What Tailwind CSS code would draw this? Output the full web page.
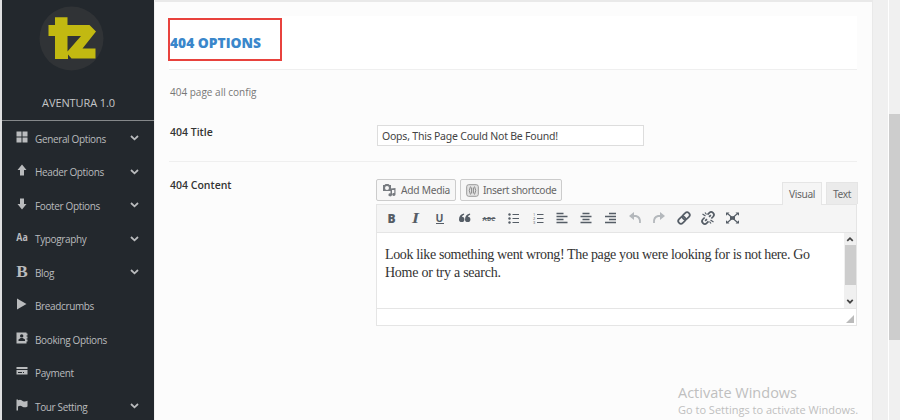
<!DOCTYPE html>
<html lang="en">
<head>
<meta charset="utf-8">
<title>404 Options</title>
<script src="https://cdn.jsdelivr.net/npm/@tailwindcss/browser@4"></script>
</head>
<body class="w-[900px] h-[420px] overflow-hidden bg-[#f1f1f1] font-['Open_Sans','Noto_Sans',sans-serif]">
<div class="relative flex w-[900px] h-[420px] overflow-hidden">
  <aside class="w-[154px] shrink-0 bg-[#23282d] border-l-2 border-l-[#dfe0e1] text-[#b9bbbd]">
    <div class="h-[121px] border-b border-[#85888a] flex flex-col items-center">
      <svg class="mt-[6px] -ml-[13px] shrink-0" width="65" height="65" viewBox="0 0 65 65">
        <circle cx="32.500" cy="32.500" r="32" fill="#303336"/>
        <path fill="#c2b911" d="M16 11.300H28.500V19H50.500L57 25.500L43.500 42.500H56.500V52.500H32.500L29 48.500V53H16V30H9.500V19H16ZM28.500 30V45.500L42 30Z"/>
      </svg>
      <div class="mt-[24px] ml-px text-[11px] leading-[16px] tracking-[-0.1px] text-[#c4c6c8]">AVENTURA 1.0</div>
    </div>
    <nav class="pt-px text-[10px] tracking-[-0.36px] leading-[16px]">
      <div class="h-[33.500px] flex items-center pl-[14px] pr-[15px]"><svg class="w-[12px] h-[12px] -mt-[4px] mr-[7px]" viewBox="0 0 12 12" fill="currentColor"><path d="M.5.500h5v5h-5zM6.500.500h5v5h-5zM.5 6.500h5v5h-5zM6.500 6.500h5v5h-5z"/></svg><span class="flex-1">General Options</span><svg class="w-[9px] h-[6px] -mt-[1px]" viewBox="0 0 9 6" fill="none" stroke="currentColor" stroke-width="1.800"><path d="M1 1l3.500 3.300L8 1"/></svg></div>
      <div class="h-[33.500px] flex items-center pl-[14px] pr-[15px]"><svg class="w-[12px] h-[12px] -mt-[4px] mr-[7px]" viewBox="0 0 12 12" fill="currentColor"><path d="M6 .5L10.500 6H8v5.500H4V6H1.500z"/></svg><span class="flex-1">Header Options</span><svg class="w-[9px] h-[6px] -mt-[1px]" viewBox="0 0 9 6" fill="none" stroke="currentColor" stroke-width="1.800"><path d="M1 1l3.500 3.300L8 1"/></svg></div>
      <div class="h-[33.500px] flex items-center pl-[14px] pr-[15px]"><svg class="w-[12px] h-[12px] -mt-[4px] mr-[7px]" viewBox="0 0 12 12" fill="currentColor"><path d="M6 11.500L1.500 6H4V.5h4V6h2.500z"/></svg><span class="flex-1">Footer Options</span><svg class="w-[9px] h-[6px] -mt-[1px]" viewBox="0 0 9 6" fill="none" stroke="currentColor" stroke-width="1.800"><path d="M1 1l3.500 3.300L8 1"/></svg></div>
      <div class="h-[33.500px] flex items-center pl-[14px] pr-[15px]"><svg class="w-[12px] h-[12px] -mt-[4px] mr-[7px] overflow-visible" viewBox="0 0 12 12" fill="currentColor"><text x=".3" y="10" letter-spacing="0" font-family="Open Sans" font-weight="700" font-size="11" textLength="11.500" lengthAdjust="spacingAndGlyphs">Aa</text></svg><span class="flex-1">Typography</span><svg class="w-[9px] h-[6px] -mt-[1px]" viewBox="0 0 9 6" fill="none" stroke="currentColor" stroke-width="1.800"><path d="M1 1l3.500 3.300L8 1"/></svg></div>
      <div class="h-[33.500px] flex items-center pl-[14px] pr-[15px]"><svg class="w-[12px] h-[12px] -mt-[4px] mr-[7px] overflow-visible" viewBox="0 0 12 12" fill="currentColor"><text x=".3" y="11.500" letter-spacing="0" font-family="Liberation Serif" font-weight="700" font-size="17" textLength="11.500" lengthAdjust="spacingAndGlyphs">B</text></svg><span class="flex-1">Blog</span><svg class="w-[9px] h-[6px] -mt-[1px]" viewBox="0 0 9 6" fill="none" stroke="currentColor" stroke-width="1.800"><path d="M1 1l3.500 3.300L8 1"/></svg></div>
      <div class="h-[33.500px] flex items-center pl-[14px] pr-[15px]"><svg class="w-[12px] h-[12px] -mt-[4px] mr-[7px]" viewBox="0 0 12 12" fill="currentColor"><path d="M1 .5L10.500 6L1 11.500z"/></svg><span class="flex-1">Breadcrumbs</span></div>
      <div class="h-[33.500px] flex items-center pl-[14px] pr-[15px]"><svg class="w-[12px] h-[12px] -mt-[4px] mr-[7px]" viewBox="0 0 12 12"><path fill="currentColor" d="M.5.500h10v1h1v2h-1v1h1v2h-1v1h1v2h-1v2H.5z"/><circle cx="5.700" cy="3.900" r="1.700" fill="#23282d"/><path fill="#23282d" d="M2.500 9V7.500l2.200-1.600h2L9 7.500V9z"/></svg><span class="flex-1">Booking Options</span></div>
      <div class="h-[33.500px] flex items-center pl-[14px] pr-[15px]"><svg class="w-[12px] h-[12px] -mt-[4px] mr-[7px]" viewBox="0 0 12 12"><path fill="currentColor" d="M.5 2h11v2H.5zM.5 5h11v4.500H.5z"/><path stroke="#23282d" d="M2 7.500h4M7 7.500h1"/></svg><span class="flex-1">Payment</span></div>
      <div class="h-[33.500px] flex items-center pl-[14px] pr-[15px]"><svg class="w-[12px] h-[12px] -mt-[4px] mr-[7px]" viewBox="0 0 12 12" fill="currentColor"><path d="M.5.500h1.500v.8C4.500 0 5.500 1.200 7 2.200c1.500.6 3 .3 4.500-.4v5.700c-2 1.200-3.500 1-5 .2C5 6.700 3.800 6.500 2 7.500v4H.5z"/></svg><span class="flex-1">Tour Setting</span><svg class="w-[9px] h-[6px] -mt-[1px]" viewBox="0 0 9 6" fill="none" stroke="currentColor" stroke-width="1.800"><path d="M1 1l3.500 3.300L8 1"/></svg></div>
    </nav>
  </aside>

  <main class="ml-px w-[718px] shrink-0 bg-[#fcfcfc] border-t-2 border-t-[#e9e9e9] border-r border-r-[#e9e9e9] pl-[14px] pr-[15px]">
    <header class="mt-[14px] h-[54px] bg-white border-b border-[#efefef]">
      <div class="relative top-[2px] -left-px w-[114px] h-[43px] border-2 border-[#e8423d] flex items-center pt-[8px] text-[13.800px] font-extrabold text-[#3a87cb] whitespace-nowrap">404 OPTIONS</div>
    </header>
    <p class="mt-[14px] pl-px text-[10px] leading-[16px] text-[#777]">404 page all config</p>
    <section class="mt-[24px] pl-px h-[38px] flex border-b border-[#efefef]">
      <h2 class="w-[207px] text-[10.500px] leading-[16px] font-semibold text-[#333]">404 Title</h2>
      <div class="mt-px w-[267px] h-[21px] border border-[#ddd] bg-white pl-[4px] text-[10.500px] tracking-[-0.22px] leading-[21px] text-[#444] whitespace-nowrap font-['Noto_Sans',sans-serif]"><span>Oops, This Page Could Not Be Found!</span></div>
    </section>
    <section class="pt-[15px] pl-px flex">
      <h2 class="w-[206px] shrink-0 text-[10.500px] leading-[16px] font-semibold text-[#333]">404 Content</h2>
      <div class="w-[482px] shrink-0 mt-[2px]">
        <div class="flex h-[25px] text-[10.200px] tracking-[-0.36px] text-[#666] font-['Noto_Sans',sans-serif]">
          <div class="w-[80px] h-[22px] border border-[#ccc] rounded-[2px] bg-[#f7f7f7] flex items-center pl-[5px] pt-px tracking-[-0.25px] whitespace-nowrap"><svg class="mr-[5px] -mt-px shrink-0" width="14" height="14" viewBox="0 0 14 14" fill="#777b80"><path fill-rule="evenodd" d="M1 2h1.500L3.500 1h3l1 1H9v6H1zM5 3a2 2 0 1 0 0 4a2 2 0 0 0 0-4z"/><path d="M8.500 5.500L13.500 5v6.500a1.700 1.500 0 1 1-1.200-1.500V7H10v5a1.800 1.500 0 1 1-1.500-1.600z"/></svg>Add Media</div>
          <div class="ml-[4px] w-[102px] h-[22px] border border-[#ccc] rounded-[2px] bg-[#f7f7f7] flex items-center pl-[5px] pt-px whitespace-nowrap"><svg class="mr-[4px] shrink-0" width="13" height="13" viewBox="0 0 13 13"><rect x=".7" y=".7" width="11.600" height="11.600" rx="2" fill="#e4e4e4" stroke="#999"/><path d="M4.500 2.500Q2 6.500 4.500 10.500M8.500 2.500Q11 6.500 8.500 10.500M5.600 3.500v6M7.400 3.500v6" fill="none" stroke="#888"/></svg>Insert shortcode</div>
          <div class="relative z-10 ml-[220px] mt-[3px] w-[40px] h-[23px] border border-b-0 border-[#e5e5e5] bg-[#f5f5f5] text-center leading-[23px]">Visual</div>
          <div class="ml-[4px] mt-[3px] w-[32px] h-[22px] border border-b-0 border-[#e5e5e5] bg-[#ebebeb] text-center leading-[23px]">Text</div>
        </div>
        <div class="h-[122px] w-[481px] border border-[#e5e5e5] bg-white flex flex-col">
          <div class="h-[28px] shrink-0 bg-[#f5f5f5] border-b border-[#e5e5e5]">
            <svg width="479" height="27" viewBox="377 205 479 27" fill="none" stroke="#555d66" stroke-width="1.500">
              <g fill="#555d66" stroke="none">
                <text x="387.500" y="222.500" font-family="Open Sans" font-weight="800" font-size="12">B</text>
                <text x="412" y="222.500" font-family="Liberation Serif" font-weight="700" font-style="italic" font-size="14" textLength="7" lengthAdjust="spacingAndGlyphs">I</text>
                <text x="435.500" y="221.500" font-family="Open Sans" font-weight="700" font-size="10.500">U</text>
                <text x="482.500" y="220.500" font-family="Open Sans" font-weight="700" font-size="6" textLength="12.500">ABC</text>
                <path d="M464 213.500q-5 1-5 6a2.700 2.700 0 1 0 2.900-2.800q.5-1.600 2.300-2zM470 213.500q-5 1-5 6a2.700 2.700 0 1 0 2.900-2.800q.5-1.600 2.300-2z"/>
                <circle cx="509.500" cy="214.500" r="1.200"/><circle cx="509.500" cy="218.500" r="1.200"/><circle cx="509.500" cy="222.500" r="1.200"/>
                <text x="533" y="216" font-family="Open Sans" font-size="4">1</text><text x="533" y="220" font-family="Open Sans" font-size="4">2</text><text x="533" y="224" font-family="Open Sans" font-size="4">3</text>
              </g>
              <path stroke-width="1" d="M436 223.500h8M482.500 218.500h13M512.500 214.500h6.500M512.500 218.500h6.500M512.500 222.500h6.500M537 214.500h6.500M537 218.500h6.500M537 222.500h6.500"/>
              <path d="M556.500 213.500h7M556.500 216.500h11M556.500 219.500h7M556.500 222.500h11M582.500 213.500h7M580.500 216.500h11M582.500 219.500h7M580.500 222.500h11M609 213.500h7M605 216.500h11M609 219.500h7M605 222.500h11"/>
              <path stroke="#b4b8bc" stroke-width="1.800" d="M632 216h4q4.500 1 4 7M662 216h-4q-4.500 1-4 7"/>
              <path fill="#b4b8bc" stroke="none" d="M629 216l5-4v8zM665 216l-5-4v8z"/>
              <g stroke-width="1.700" transform="rotate(-45 684 218)"><rect x="677" y="215.300" width="8" height="5.400" rx="2.700"/><rect x="683" y="215.300" width="8" height="5.400" rx="2.700"/></g>
              <g stroke-width="1.700" transform="rotate(-45 708 218)"><path d="M706 215.300h-2.500a2.700 2.700 0 0 0 0 5.400h2.500M710 215.300h2.500a2.700 2.700 0 0 1 0 5.400h-2.500M704 218h2.500M709.500 218h2.500"/></g>
              <path stroke-width="1.200" d="M702.500 214l3 2M705 212.500l1.500 2M713.500 222l-3-2M711 223.500l-1.500-2"/>
              <path stroke-width="1.100" d="M727.500 213.500l10 9M737.500 213.500l-10 9"/>
              <path fill="#555d66" stroke="none" d="M726 212.500h3.500l-3.500 3.200zM739 212.500h-3.500l3.500 3.200zM726 223.500h3.500l-3.500-3.200zM739 223.500h-3.500l3.500-3.200zM730 216.300h5v3.400h-5z"/>
            </svg>
          </div>
          <div class="h-[76px] shrink-0 flex border-b border-[#e5e5e5]">
            <div class="w-[467px] pl-[8px] pt-[13px] text-[14px] leading-[18px] tracking-[-0.365px] text-[#333] whitespace-nowrap font-['Liberation_Serif',serif]"><div>Look like something went wrong! The page you were looking for is not here. Go</div><div class="tracking-[-0.25px]">Home or try a search.</div></div>
            <div class="w-[12px] bg-[#f0f0f0] flex flex-col items-center">
              <svg width="12" height="12" viewBox="0 0 12 12" fill="none" stroke="#444" stroke-width="1.700"><path d="M3.200 8L6 5.200 8.800 8"/></svg>
              <div class="w-[11px] h-[41px] bg-[#cdcdcd]"></div>
              <svg class="mt-[11px]" width="12" height="12" viewBox="0 0 12 12" fill="none" stroke="#444" stroke-width="1.700"><path d="M3.200 4L6 6.800 8.800 4"/></svg>
            </div>
          </div>
          <div class="flex-1 flex justify-end items-end pr-[2px] pb-[2px]"><svg width="8" height="8" viewBox="0 0 8 8" fill="#bbb"><path d="M8 0v8H0z"/></svg></div>
        </div>
      </div>
    </section>
  </main>
  <div class="w-[16px] border-r border-white bg-[#f0f0f0]"></div>
  <div class="w-[11px] bg-[#f0f0f0] pt-[114px]"><div class="h-[226px] bg-[#cdcdcd]"></div></div>

  <div class="absolute left-[678px] top-[383px] text-[#bfbfbf] whitespace-nowrap">
    <div class="text-[14.500px] leading-[19px]">Activate Windows</div>
    <div class="text-[11px] leading-[15px]">Go to Settings to activate Windows.</div>
  </div>
</div>
</body>
</html>
